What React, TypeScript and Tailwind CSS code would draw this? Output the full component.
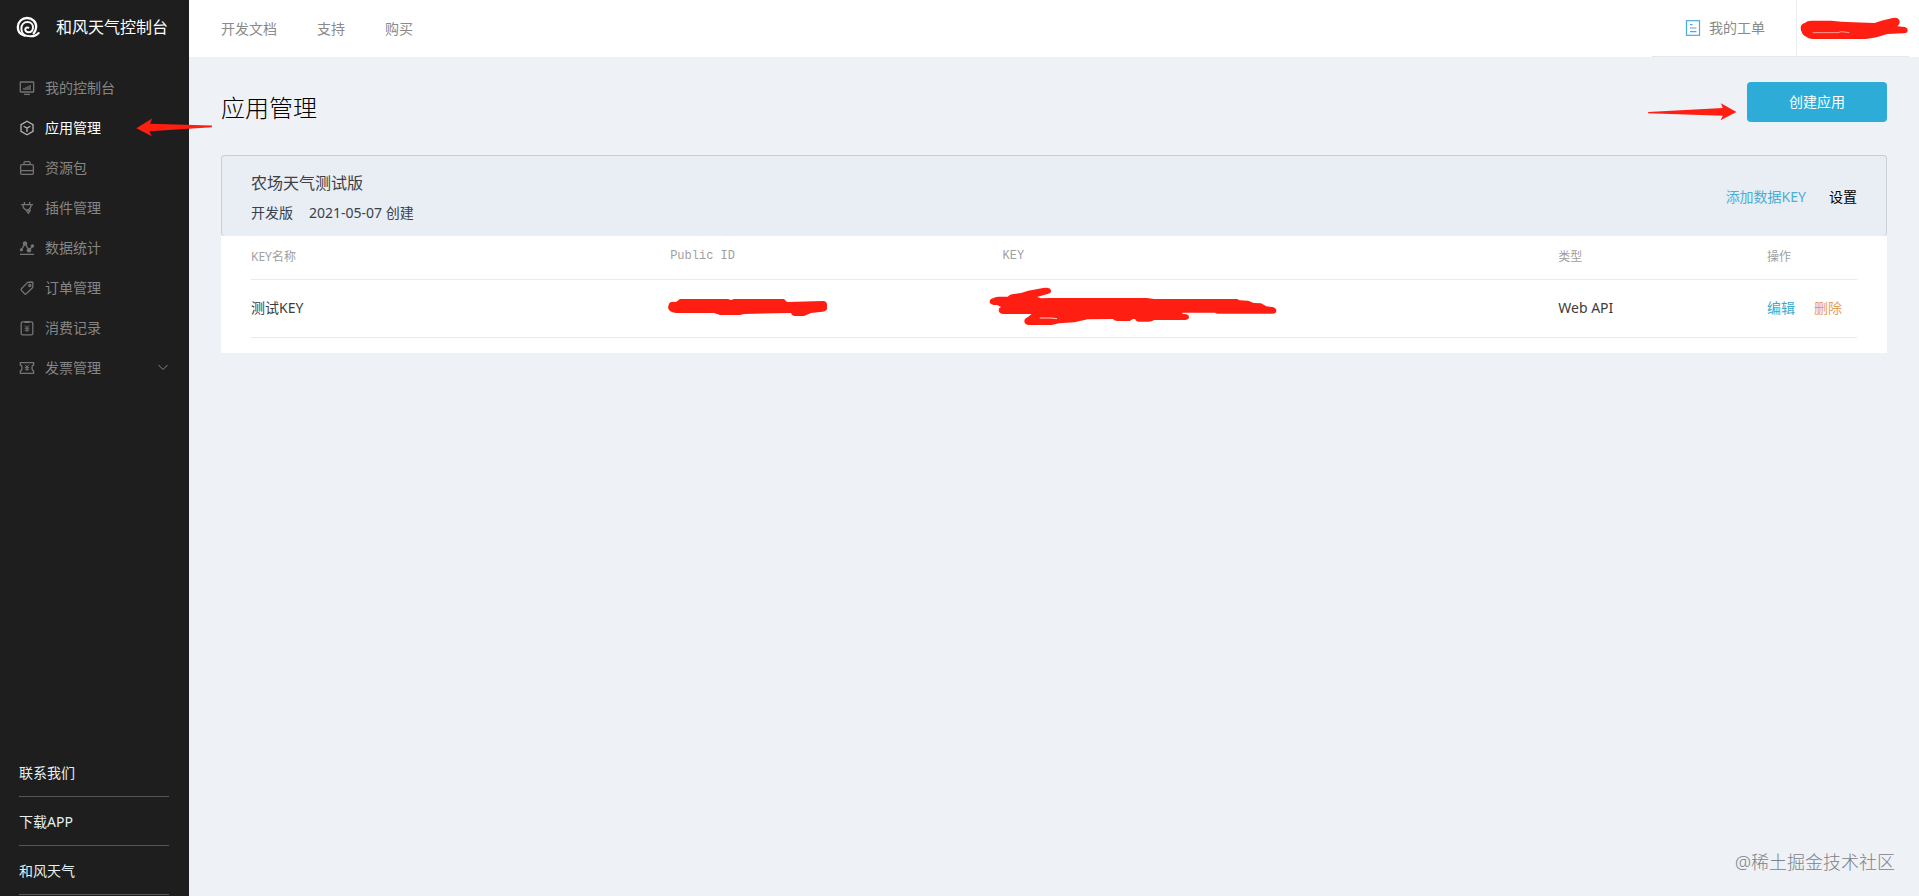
import React from "react";

type IconProps = { children: React.ReactNode };

const MenuIcon = ({ children }: IconProps) => (
  <svg
    viewBox="0 0 16 16"
    className="h-4 w-4 shrink-0"
    fill="none"
    stroke="currentColor"
    strokeWidth="1.3"
    aria-hidden="true"
  >
    {children}
  </svg>
);

const Logo = () => (
  <svg
    viewBox="50 47 72 66"
    className="h-[22px] w-6 shrink-0"
    fill="none"
    stroke="#fff"
    strokeLinecap="round"
    aria-hidden="true"
  >
    <path d="M76 106C62 102 55 92 55.500 80C56 64 68 53 83 53C99 53 111 65 110.500 80C110 88 108 94 103 99" strokeWidth="7" />
    <path
      d="M118 98C112 105 104 108 94 108C76 108 66 98 66 85C66 73 74 65 84.500 65C95 65 101 73 101 81C101 90 95 96 88 96C81 96 77 91 78 86C79 82 83 80 87 82"
      strokeWidth="6"
    />
  </svg>
);

const menu = [
  {
    name: "我的控制台",
    icon: (
      <>
        <rect x="1.3" y="2" width="13.4" height="10" rx="0.6" />
        <path d="M5 14.3h6M5 10V8M7 10V7M9 10V6M11 10V5" />
      </>
    ),
  },
  {
    name: "应用管理",
    active: true,
    icon: (
      <>
        <path d="M8 1.2 14 4.6v6.8L8 14.8 2 11.4V4.6Z" />
        <path d="M4.6 6.2 8 8l3.4-1.8M8 8v4" />
      </>
    ),
  },
  {
    name: "资源包",
    icon: (
      <>
        <rect x="1.6" y="4.6" width="12.8" height="9.8" rx="1.4" />
        <path d="M5 4.6V2.8Q5 1.6 6.2 1.6h3.6Q11 1.6 11 2.8v1.8M1.6 10.6h12.8" />
      </>
    ),
  },
  {
    name: "插件管理",
    icon: (
      <>
        <path d="M2 4.6h12M5.4 2v2.6M10.6 2v2.6M4 4.8q0 4 3 5h2q3-1 3-5" />
        <path d="M7 10l2.400 3.400 2.200-3.800M9 10l1.200 1.600" />
      </>
    ),
  },
  {
    name: "数据统计",
    icon: (
      <>
        <path d="M1 14.4h14M2.4 9.8 6 3.6l4 6.6 3.6-4" />
        <g fill="currentColor" stroke="none">
          <circle cx="2.4" cy="9.8" r="1.6" />
          <circle cx="6" cy="3.4" r="2.2" />
          <circle cx="10" cy="10.2" r="2.3" />
          <circle cx="13.4" cy="6" r="1.8" />
        </g>
      </>
    ),
  },
  {
    name: "订单管理",
    icon: (
      <>
        <path d="M8.6 2.4 13 2q1 0 1 1l-.4 4.6-6.4 6.2q-.8.8-1.6 0L2.4 10.4q-.8-.8 0-1.6Z" />
        <circle cx="10.8" cy="5.4" r="1.1" />
      </>
    ),
  },
  {
    name: "消费记录",
    icon: (
      <>
        <rect x="2.200" y="1.800" width="11.600" height="13" rx="1.400" />
        <path d="M5.400 2h5.200" strokeWidth="2" />
        <path d="M6 5.4 8 7.600l2-2.200M5.600 8.200h4.800M5.600 10.200h4.800M8 7.600v4.400" strokeWidth="1" />
      </>
    ),
  },
  {
    name: "发票管理",
    expandable: true,
    icon: (
      <>
        <path d="M1.400 2.600h13.200v2.600q-1.600 0-1.600 2.800t1.600 2.800v2.600H1.400v-2.600q1.600 0 1.600-2.800T1.400 5.200Z" />
        <path d="M6.200 4.800 8 7l1.800-2.200M5.800 7.400h4.400M5.800 9.200h4.400M8 7v4" strokeWidth="1" />
      </>
    ),
  },
];

const footerLinks = ["联系我们", "下载APP", "和风天气"];
const topLinks = ["开发文档", "支持", "购买"];

const Sidebar = () => (
  <aside className="relative z-10 flex w-[189px] shrink-0 flex-col bg-[#1e1e1e]">
    <a href="#" className="mt-4 flex h-[22px] items-center gap-4 pl-4 text-base text-white">
      <Logo />
      和风天气控制台
    </a>
    <ul className="mt-[30px] mb-auto">
      {menu.map(({ name, icon, active, expandable }) => (
        <li key={name} className="relative">
          <a
            href="#"
            className={
              active
                ? "flex h-10 items-center gap-[10px] pr-[21px] pl-[19px] text-white"
                : "flex h-10 items-center gap-[10px] pr-[21px] pl-[19px] text-[#868686]"
            }
          >
            <span className={active ? "text-[#b4b4b4]" : "text-[#747474]"}>
              <MenuIcon>{icon}</MenuIcon>
            </span>
            {name}
            {expandable && (
              <svg viewBox="0 0 10 10" className="ml-auto h-[10px] w-[10px]" aria-hidden="true">
                <path d="M0.5 2 5 6.500l4.500-4.500" fill="none" stroke="currentColor" />
              </svg>
            )}
          </a>
          {active && (
            <svg
              viewBox="408 352 230 56"
              className="absolute top-[10px] left-[136px] h-[19px] w-[77px]"
              aria-hidden="true"
            >
              <path d="M409 382 456 353 450 369 635 374V379L448 391 455 406Z" fill="#ff1e12" />
            </svg>
          )}
        </li>
      ))}
    </ul>
    <ul className="pr-5 pb-px pl-[19px]">
      {footerLinks.map((link) => (
        <li key={link} className="border-b border-[#565656]">
          <a href="#" className="flex h-12 items-center pt-0.5 text-[#e4f1f1]">
            {link}
          </a>
        </li>
      ))}
    </ul>
  </aside>
);

const TopBar = () => (
  <header className="flex h-[57px] justify-between bg-white pl-8 text-[#8a8a8a]">
    <nav className="flex items-center gap-10">
      {topLinks.map((link) => (
        <a key={link} href="#">
          {link}
        </a>
      ))}
    </nav>
    <div className="mr-[10px] flex border-b border-[#e4e8ed]">
      <a href="#" className="flex items-center gap-2 border-r border-[#ebedf0] pr-[31px] pl-[33px]">
        <svg viewBox="0 0 16 16" className="h-4 w-4" fill="none" stroke="#49abd8" aria-hidden="true">
          <rect x="1.5" y="0.7" width="13" height="14.6" strokeWidth="1.2" />
          <path d="M5 4.600h2.600M5 8h6.400M5 11.600h6.400" strokeWidth="1.2" />
        </svg>
        我的工单
      </a>
      <div className="flex w-28 items-center pl-[3px]">
        <svg viewBox="540 52 324 69" className="h-[23px] w-[108px]" aria-hidden="true">
          <path
            d="M542 86Q542 73 554 70 562 63 574 63H634L664 66 700 68 764 70 784 63 818 55Q834 51 838 62 842 72 832 80L854 82Q863 84 863 92 863 101 852 101L802 103 770 113 738 118H576Q564 117 560 112 544 106 542 86Z"
            fill="#ff1e12"
          />
          <path d="M578 99H654L664 96 688 99" fill="none" stroke="#ff9c94" strokeWidth="3" />
        </svg>
      </div>
    </div>
  </header>
);

const AppCard = () => (
  <section>
    <div className="flex h-[81px] items-center justify-between rounded border border-b-0 border-[#c9ced4] bg-[#e9edf4] px-[29px]">
      <div className="pt-1.5">
        <h2 className="text-base leading-7 text-[#3c4045]">农场天气测试版</h2>
        <p className="flex gap-4 leading-8 text-[#36424f]">
          <span>开发版</span>
          <span>2021-05-07 创建</span>
        </p>
      </div>
      <div className="flex gap-[23px] pt-0.5">
        <a href="#" className="text-[#4aaed5]">
          添加数据KEY
        </a>
        <a href="#" className="text-black">
          设置
        </a>
      </div>
    </div>
    <div className="bg-white px-[30px] pb-[15px]">
      <table className="w-full table-fixed text-left">
        <colgroup>
          <col className="w-[26.1%]" />
          <col className="w-[20.7%]" />
          <col className="w-[34.6%]" />
          <col className="w-[13%]" />
          <col />
        </colgroup>
        <thead>
          <tr className="h-[43px] border-b border-[#ebebeb] text-xs text-[#a0a0a0]">
            <th className="font-normal">KEY名称</th>
            <th className="pb-0.5 font-['Liberation_Mono',monospace] font-normal">Public ID</th>
            <th className="pb-0.5 font-['Liberation_Mono',monospace] font-normal">KEY</th>
            <th className="font-normal">类型</th>
            <th className="font-normal">操作</th>
          </tr>
        </thead>
        <tbody>
          <tr className="h-[58px] border-b border-[#ebebeb] text-[#3c3c3c]">
            <td>测试KEY</td>
            <td>
              <svg
                viewBox="0 0 159 18"
                className="-ml-0.5 h-[18px] w-[159px]"
                aria-hidden="true"
              >
                <path
                  d="M1 5Q2 2 8 3L12 0H60L63 1 66 0H116L119 3 155 2Q159 2 159 6V10Q158 13 152 13L143 14 136 17H127Q124 17 123 14L76 15 72 16H52L46 14H8Q0 13 0 8Z"
                  fill="#ff1e12"
                />
              </svg>
            </td>
            <td className="pb-1">
              <svg
                viewBox="88 140 864 117"
                className="-ml-3.5 h-[39px] w-[288px]"
                aria-hidden="true"
              >
                <path
                  d="M90 184Q90 176 100 174 106 169 116 169H144Q150 161 162 161L184 158 206 151 250 143Q272 139 274 151 275 159 266 160L232 170 244 174 272 173H562L584 176H832L840 180 866 181 882 188 904 189 920 198 938 200Q950 203 950 211 950 220 938 220H772L766 217H668V220L680 222Q689 224 688 231 687 239 676 239H584Q576 244 566 244H536Q528 243 526 236L520 236 510 242H474Q464 242 460 236L384 237 344 246 298 249 276 254H206Q194 252 194 242 194 234 206 229L216 221H130Q117 219 117 209 117 203 124 200L112 194Q90 194 90 184Z"
                  fill="#ff1e12"
                />
                <path d="M240 233H274L292 235" fill="none" stroke="#ffd0cc" strokeWidth="3" />
              </svg>
            </td>
            <td>Web API</td>
            <td>
              <div className="flex gap-[19px]">
                <a href="#" className="text-[#3aaad0]">
                  编辑
                </a>
                <a href="#" className="text-[#e79d5a]">
                  删除
                </a>
              </div>
            </td>
          </tr>
        </tbody>
      </table>
    </div>
  </section>
);

const App = () => (
  <div className="relative flex min-h-screen bg-[#eef1f6] font-['Noto_Sans','Noto_Sans_CJK_SC',sans-serif] text-sm">
    <Sidebar />
    <div className="min-w-0 flex-1">
      <TopBar />
      <main className="px-8 pt-[25px]">
        <div className="mb-[33px] flex h-10 items-start justify-between">
          <h1 className="text-2xl leading-[52px] font-light text-black">应用管理</h1>
          <div className="relative">
            <svg
              viewBox="84 308 266 54"
              className="absolute top-[21px] right-[150px] h-[18px] w-[89px]"
              aria-hidden="true"
            >
              <path d="M84 335 308 323 302 309 349 335 301 360 308 346 84 339Z" fill="#ff1e12" />
            </svg>
            <button className="h-10 w-[140px] rounded bg-[#2eacd8] text-white">创建应用</button>
          </div>
        </div>
        <AppCard />
      </main>
    </div>
    <p className="absolute right-6 bottom-5 text-lg font-light text-[#7d8288]">@稀土掘金技术社区</p>
  </div>
);

export default App;
